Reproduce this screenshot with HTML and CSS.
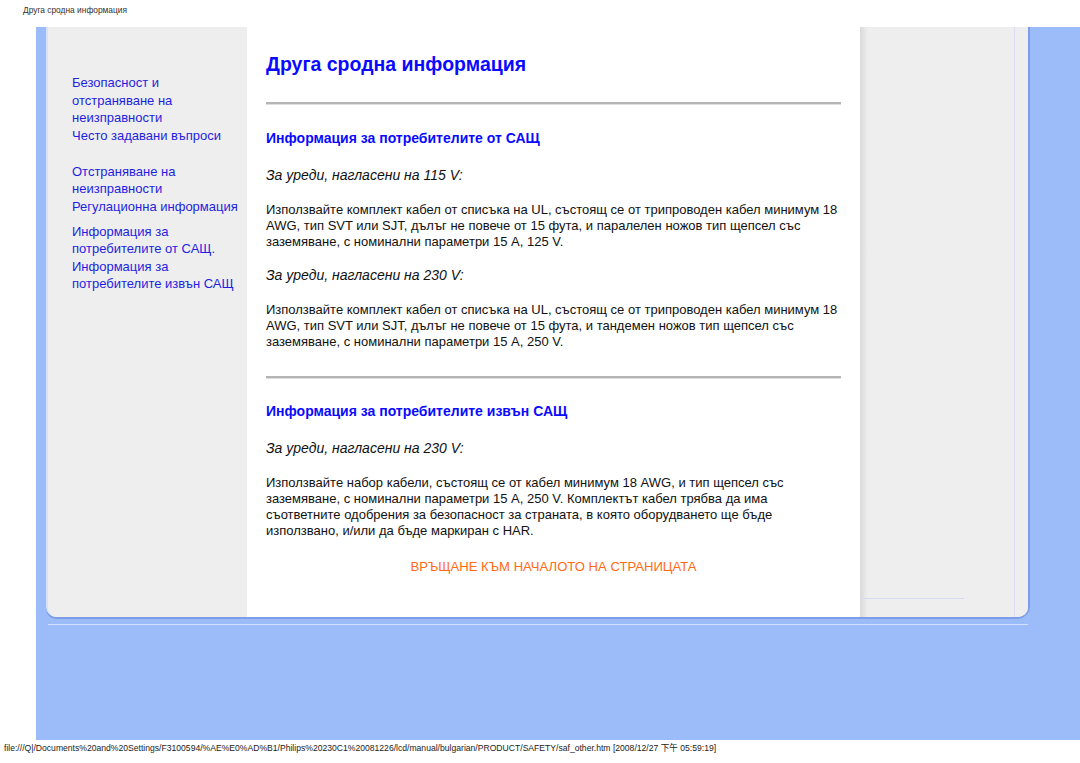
FILE: index.html
```html
<!DOCTYPE html>
<html lang="bg">
<head>
<meta charset="utf-8">
<title>Друга сродна информация</title>
<link rel="stylesheet" href="styles.css">
</head>
<body>
<div class="top-title">Друга сродна информация</div>
<div class="frame">
  <div class="panel">
    <nav class="side">
      <div class="group g1">
        <a href="#">Безопасност и отстраняване на неизправности</a>
        <a href="#">Често задавани въпроси</a>
      </div>
      <div class="group g2">
        <a href="#">Отстраняване на неизправности</a>
        <a href="#">Регулационна информация</a>
      </div>
      <div class="group g3">
        <a href="#">Информация за потребителите от САЩ.</a>
        <a href="#">Информация за потребителите извън САЩ</a>
      </div>
    </nav>
    <main class="main">
      <h1 class="title">Друга сродна информация</h1>
      <div class="hr hr1"></div>
      <h3 class="sub">Информация за потребителите от САЩ</h3>
      <p class="it">За уреди, нагласени на 115 V:</p>
      <p class="txt">Използвайте комплект кабел от списъка на UL, състоящ се от трипроводен кабел минимум 18 AWG, тип SVT или SJT, дълъг не повече от 15 фута, и паралелен ножов тип щепсел със заземяване, с номинални параметри 15 A, 125 V.</p>
      <p class="it">За уреди, нагласени на 230 V:</p>
      <p class="txt">Използвайте комплект кабел от списъка на UL, състоящ се от трипроводен кабел минимум 18 AWG, тип SVT или SJT, дълъг не повече от 15 фута, и тандемен ножов тип щепсел със заземяване, с номинални параметри 15 A, 250 V.</p>
      <div class="hr hr2"></div>
      <h3 class="sub">Информация за потребителите извън САЩ</h3>
      <p class="it">За уреди, нагласени на 230 V:</p>
      <p class="txt">Използвайте набор кабели, състоящ се от кабел минимум 18 AWG, и тип щепсел със заземяване, с номинални параметри 15 A, 250 V. Комплектът кабел трябва да има съответните одобрения за безопасност за страната, в която оборудването ще бъде използвано, и/или да бъде маркиран с HAR.</p>
      <p class="back"><a href="#">ВРЪЩАНЕ КЪМ НАЧАЛОТО НА СТРАНИЦАТА</a></p>
    </main>
    <aside class="right">
      <div class="right-line"></div>
      <div class="right-rule"></div>
    </aside>
  </div>
  <div class="under-line"></div>
</div>
<div class="footer">file:///Q|/Documents%20and%20Settings/F3100594/%AE%E0%AD%B1/Philips%20230C1%20081226/lcd/manual/bulgarian/PRODUCT/SAFETY/saf_other.htm [2008/12/27 下午 05:59:19]</div>
</body>
</html>
```

FILE: styles.css
```css
html, body {
  margin: 0;
  padding: 0;
  background: #ffffff;
  font-family: "Liberation Sans", Arial, "Noto Sans CJK TC", sans-serif;
}

.top-title {
  height: 27px;
  box-sizing: border-box;
  padding-left: 23px;
  padding-top: 4px;
  font-size: 8.4px;
  line-height: 13px;
  color: #333333;
}

.frame {
  margin-left: 36px;
  height: 713px;
  background: #9bbcf8;
  padding-left: 10px;
  box-sizing: border-box;
  overflow: hidden;
}

.panel {
  width: 982px;
  height: 590px;
  box-sizing: border-box;
  display: flex;
  border-left: 2px solid #d6e2fb;
  border-radius: 0 0 10px 10px;
  box-shadow: 0 2px 0 #7d9de9, 2px 0 0 #7d9de9;
  overflow: hidden;
  background: #eeeeee;
}

.side {
  width: 199px;
  flex: none;
  background: #eeeeee;
  box-sizing: border-box;
  padding: 47px 0 0 24px;
  font-size: 13px;
  line-height: 17.5px;
}

.side .group a {
  display: block;
  width: 172px;
  color: #1f1fe0;
  text-decoration: none;
}

.side .g2 { margin-top: 18.5px; }
.side .g3 { margin-top: 7.5px; }

.main {
  width: 613px;
  flex: none;
  background: #ffffff;
  box-sizing: border-box;
  padding: 25px 19px 0 19px;
  color: #111111;
}

.title {
  margin: 0;
  font-size: 19.5px;
  line-height: 24px;
  font-weight: bold;
  color: #0a0aff;
}

.hr {
  height: 2px;
  background: #b4b4b4;
  border-bottom: 1px solid #dedede;
}
.hr1 { margin-top: 26px; }
.hr2 { margin-top: 26px; }

.sub {
  margin: 24px 0 0 0;
  font-size: 14px;
  line-height: 18px;
  font-weight: bold;
  color: #0a0aff;
}
.hr2 + .sub { margin-top: 23px; }

.it {
  margin: 19px 0 0 0;
  font-size: 14px;
  line-height: 18px;
  font-style: italic;
}
.txt + .it { margin-top: 16px; }

.txt {
  margin: 18px 0 0 0;
  font-size: 13px;
  line-height: 16px;
}

.back {
  margin: 20px 0 0 0;
  text-align: center;
  font-size: 13.1px;
  line-height: 16px;
}
.back a {
  color: #ff6a13;
  text-decoration: none;
}

.right {
  width: 168px;
  flex: none;
  position: relative;
  background: linear-gradient(to right, #d9d9d9 0, #eeeeee 8px, #eeeeee 100%);
}

.right-line {
  position: absolute;
  top: 0;
  bottom: 0;
  left: 154px;
  width: 1px;
  background: #dcdcf4;
}

.right-rule {
  position: absolute;
  left: 0;
  width: 104px;
  top: 571px;
  height: 1px;
  background: #d4dcf2;
}

.under-line {
  margin-left: 2px;
  margin-top: 7px;
  width: 980px;
  height: 1px;
  background: #d3e0fd;
}

.footer {
  padding-left: 4px;
  font-size: 8.6px;
  line-height: 17px;
  color: #222222;
  white-space: nowrap;
}
```
